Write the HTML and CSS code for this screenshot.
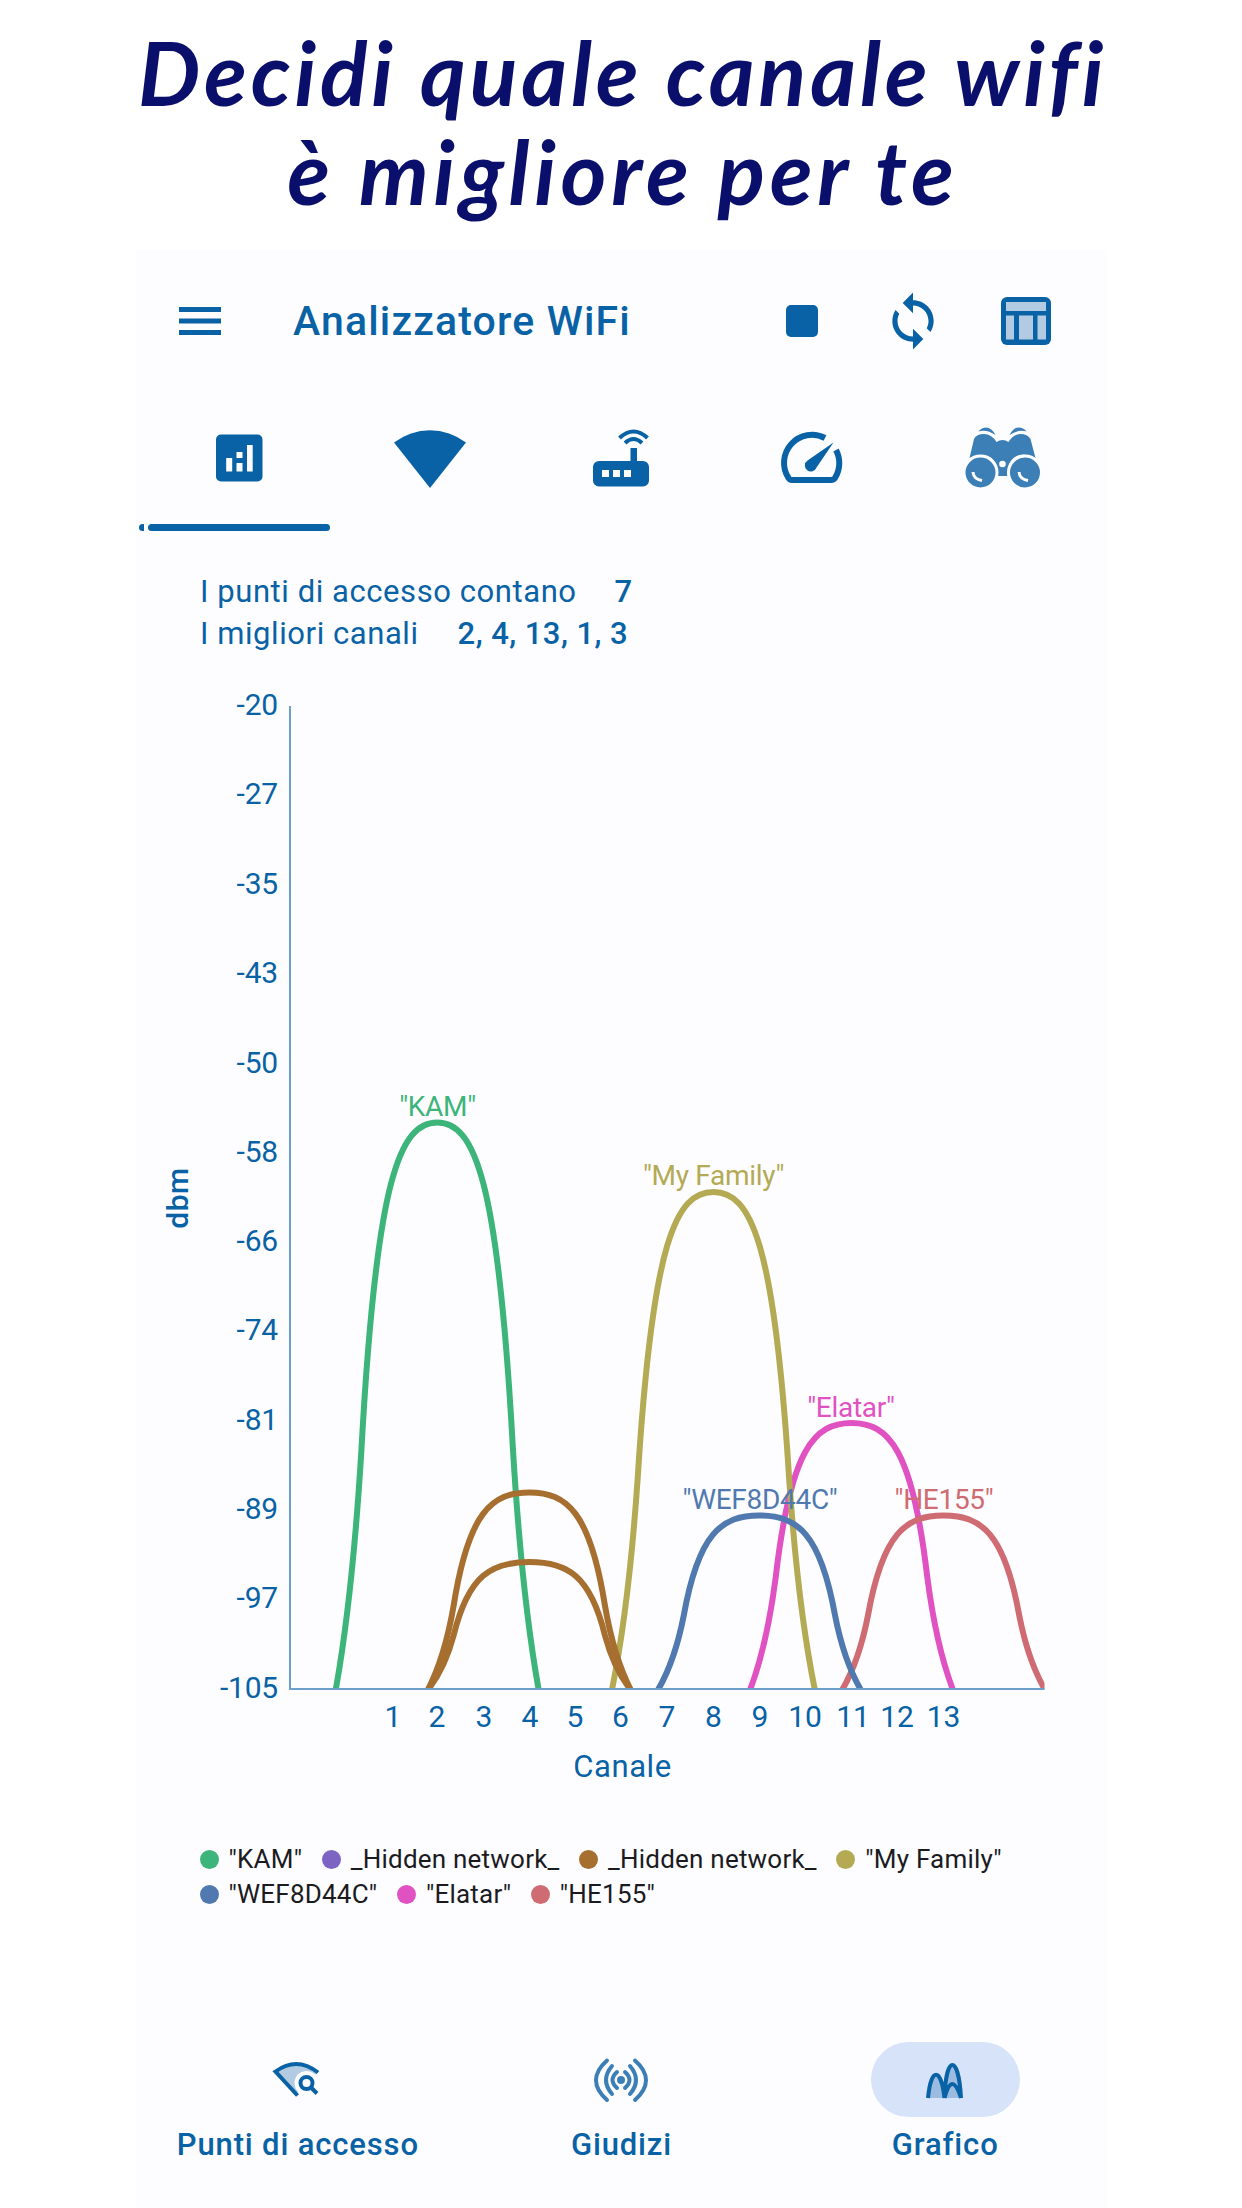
FILE: index.html
```html
<!DOCTYPE html>
<html lang="it">
<head>
    <meta charset="UTF-8">
    <meta name="viewport" content="width=device-width, initial-scale=1.0">
    <title>Analizzatore WiFi</title>
    <link rel="stylesheet" href="styles.css">
</head>
<body>
    <h1 class="headline">
        <span class="line-one">Decidi quale canale wifi</span>
        <span class="line-two">è migliore per te</span>
    </h1>
    <div class="phone">
        <header class="topbar">
            <svg class="menu" width="42" height="28" viewBox="0 0 42 28">
                <path d="M0 0h42v5H0zM0 11.500h42v5H0zM0 23h42v5H0z"/>
            </svg>
            <h2>Analizzatore WiFi</h2>
            <svg class="stop" width="32" height="32" viewBox="0 0 32 32">
                <rect width="32" height="32" rx="5"/>
            </svg>
            <svg class="sync" width="62" height="62" viewBox="0 0 24 24">
                <path d="M12 4V1L8 5l4 4V6c3.31 0 6 2.69 6 6 0 1.01-.25 1.97-.7 2.8l1.46 1.46C19.54 15.03 20 13.57 20 12c0-4.42-3.58-8-8-8zm0 14c-3.31 0-6-2.69-6-6 0-1.01.25-1.97.7-2.8L5.24 7.74C4.46 8.97 4 10.43 4 12c0 4.42 3.58 8 8 8v3l4-4-4-4v3z"/>
            </svg>
            <svg class="table" width="50" height="48" viewBox="0 0 50 48">
                <rect width="50" height="48" rx="6"/>
                <path class="tint" d="M5 5h40v9H5zM5 18.500h8v24H5zM18 18.500h14v24H18zM36.500 18.500H45v24h-8.500z"/>
            </svg>
        </header>

        <nav class="tabs">
            <svg width="80" height="64" viewBox="0 0 80 64">
                <rect x="17" y="8.500" width="46.500" height="47" rx="5"/>
                <path class="cut" d="M27.200 32h6v13.500h-6zM37.500 26h6v6h-6zM37.500 37h6v8.500h-6zM48 19h5.700v26.500H48z"/>
            </svg>
            <svg width="80" height="64" viewBox="0 0 80 64">
                <path d="M4 16.500A59 59 0 0 1 76 16.500L40 62z"/>
            </svg>
            <svg width="80" height="64" viewBox="0 0 80 64">
                <path d="M18 35H49.500V22h6.500V35H62a6 6 0 0 1 6 6V54.500a6 6 0 0 1-6 6H18a6 6 0 0 1-6-6V41a6 6 0 0 1 6-6z"/>
                <path class="cut" d="M21 44h7v7h-7zM32 44h7v7h-7zM43 44h7v7h-7z"/>
                <path class="stroke" stroke-width="4" d="M38.500 12Q52.500-1 66.500 12M44 17Q52.500 9 61 17"/>
            </svg>
            <svg width="80" height="64" viewBox="1 0 80 64">
                <path class="stroke" stroke-width="6" d="M54 12A28 28 0 0 0 17.500 52Q18.500 54 21 54H60Q62.500 54 64 52A28 28 0 0 0 65 24"/>
                <path d="M62.500 16.500L45.500 41.500A6 6 0 1 1 36.500 34.500z"/>
            </svg>
            <svg class="soft" width="80" height="64" viewBox="3.500 0 80 64">
                <path d="M10 32L14.500 13Q17 8 24.500 8Q32 8 37 16Q43 12 49 16Q54 8 61 8Q68 8 71 13L76 32L70 30Q62 26 54 32Q48 37 48 50H38.500Q38 37 32 32Q24 26 10 32z"/>
                <path d="M19 5.500Q22 1.500 27 1.500T36 9Q27 3 19 5.500zM67 5.500Q64 1.500 59 1.500T50 9Q59 3 67 5.500z"/>
                <circle class="rim" cx="21" cy="46.500" r="16.500"/>
                <circle class="rim" cx="65.500" cy="46.500" r="16.500"/>
                <circle class="cut" cx="43" cy="38" r="3.300"/>
                <path class="glint" d="M13.500 46Q14 53 22.500 54.500M59.500 46Q60 53 68.500 54.500"/>
            </svg>
        </nav>
        <div class="indicator"><i></i><b></b></div>

        <section class="summary">
            <p>I punti di accesso contano<b class="count">7</b></p>
            <p>I migliori canali<b class="channels">2, 4, 13, 1, 3</b></p>
        </section>

        <svg class="chart" width="971" height="1140" viewBox="136 670 971 1140">
            <defs>
                <!-- signal bell, one unit wide on each side and one unit high -->
                <path id="bell" vector-effect="non-scaling-stroke" d="M-1 0C-.91 .09-.81 .235-.746 .425C-.6 .9-.37 1 0 1S.6 .9 .746 .425C.81 .235 .91 .09 1 0"/>
                <clipPath id="plot"><rect x="291" y="700" width="753.500" height="989"/></clipPath>
            </defs>
            <g class="y-labels">
                <text x="278" y="715">-20</text>
                <text x="278" y="804">-27</text>
                <text x="278" y="894">-35</text>
                <text x="278" y="983">-43</text>
                <text x="278" y="1073">-50</text>
                <text x="278" y="1162">-58</text>
                <text x="278" y="1251">-66</text>
                <text x="278" y="1340">-74</text>
                <text x="278" y="1430">-81</text>
                <text x="278" y="1519">-89</text>
                <text x="278" y="1608">-97</text>
                <text x="278" y="1698">-105</text>
            </g>
            <text class="dbm" transform="translate(188 1198) rotate(-90)">dbm</text>
            <g class="curves" clip-path="url(#plot)">
                <use href="#bell" class="green" transform="translate(437.200 1690) scale(101.500 -567.500)"/>
                <use href="#bell" class="magenta" transform="translate(851.500 1690) scale(101.500 -267)"/>
                <use href="#bell" class="olive" transform="translate(713.400 1690) scale(101.500 -498)"/>
                <use href="#bell" class="brown" transform="translate(529.300 1690) scale(101.500 -197.500)"/>
                <use href="#bell" class="brown" transform="translate(529.300 1690) scale(101.500 -128)"/>
                <use href="#bell" class="red" transform="translate(943.600 1690) scale(101.500 -174.500)"/>
                <use href="#bell" class="blue" transform="translate(759.400 1690) scale(101.500 -174.500)"/>
            </g>
            <g class="names">
                <text class="green" x="437.500" y="1116">"KAM"</text>
                <text class="olive" x="713.500" y="1185">"My Family"</text>
                <text class="magenta" x="851" y="1417">"Elatar"</text>
                <text class="blue" x="760" y="1508.500">"WEF8D44C"</text>
                <text class="red" x="944" y="1508.500">"HE155"</text>
            </g>
            <path class="axis" d="M290 706V1689H1044.500"/>
            <g class="x-labels">
                <text x="393" y="1727">1</text>
                <text x="437" y="1727">2</text>
                <text x="484" y="1727">3</text>
                <text x="530" y="1727">4</text>
                <text x="575" y="1727">5</text>
                <text x="620.500" y="1727">6</text>
                <text x="667" y="1727">7</text>
                <text x="713.500" y="1727">8</text>
                <text x="760" y="1727">9</text>
                <text x="805" y="1727">10</text>
                <text x="853" y="1727">11</text>
                <text x="897" y="1727">12</text>
                <text x="943.500" y="1727">13</text>
            </g>
            <text class="axis-title" x="622.500" y="1776.500">Canale</text>
        </svg>

        <ul class="legend">
            <li class="green">"KAM"</li>
            <li class="purple">_Hidden network_</li>
            <li class="brown">_Hidden network_</li>
            <li class="olive">"My Family"</li>
            <li class="blue">"WEF8D44C"</li>
            <li class="magenta">"Elatar"</li>
            <li class="red">"HE155"</li>
        </ul>

        <nav class="bottom-nav">
            <a class="item">
                <span class="pill">
                    <svg width="60" height="50" viewBox="1 0 60 50">
                        <path class="tint" d="M9 17Q30 1 51 17L30 38z"/>
                        <path class="stroke" stroke-width="4" d="M30.500 40.500L8.500 16.500Q30 1 51 17.500"/>
                        <circle class="cut" cx="39.500" cy="28" r="12"/>
                        <path class="cut" d="M32 39L39 28L53 25V42H33z"/>
                        <circle class="stroke" stroke-width="4" cx="39.500" cy="28" r="6"/>
                        <path class="stroke" stroke-width="4" d="M43.500 32L50 38.500"/>
                    </svg>
                </span>
                Punti di accesso
            </a>
            <a class="item">
                <span class="pill">
                    <svg class="soft waves" width="60" height="50" viewBox="0 0 60 50">
                        <circle cx="29" cy="25" r="4"/>
                        <path d="M25 17Q16 25 25 33M20 11Q8 25 20 39M15 5.500Q-7 25 15 45M33 17Q42 25 33 33M38 11Q50 25 38 39M43 5.500Q65 25 43 45"/>
                    </svg>
                </span>
                Giudizi
            </a>
            <a class="item active">
                <span class="pill">
                    <svg width="60" height="50" viewBox="0 0 60 50">
                        <path class="tint" d="M13 43C15 12 27 12 29 43C30-1 44-1 46 43z"/>
                        <path class="stroke" stroke-width="4" d="M13 43C16 12 26 12 29.500 43M29.500 43C31-1 43.500-1 46 43M29.500 43Q37 15 46 43"/>
                    </svg>
                </span>
                Grafico
            </a>
        </nav>
    </div>
</body>
</html>
```
FILE: styles.css
```css
* {
    box-sizing: border-box;
}

body {
    margin: 0;
    background-color: #fff;
    font-family: Roboto, "Liberation Sans", sans-serif;
    color: #0862a5;
}

h1, h2, p, ul {
    margin: 0;
    padding: 0;
}

svg {
    display: block;
    flex: none;
    overflow: visible;
    fill: #0862a5;
}

.headline {
    height: 250px;
    padding-top: 23px;
    font-family: Lato, sans-serif;
    font-size: 88px;
    font-weight: 700;
    font-style: italic;
    line-height: 99px;
    text-align: center;
    white-space: nowrap;
    color: #0a0f6b;
}

.headline span {
    display: block;
}

.line-one {
    padding-left: 3px;
    letter-spacing: 3.9px;
}

.line-two {
    padding-left: 4px;
    letter-spacing: 4.7px;
}

.phone {
    width: 971px;
    height: 1958px;
    margin-left: 136px;
    background-color: #fdfdff;
}

.topbar {
    display: flex;
    align-items: center;
    height: 142px;
    padding-left: 43px;
}

.topbar h2 {
    width: 492px;
    padding-left: 72px;
    font-size: 41px;
    font-weight: 500;
    letter-spacing: 1.15px;
    white-space: nowrap;
}

.topbar .menu {
    margin-top: -1px;
}

.topbar .stop {
    margin-left: 73px;
}

.topbar .sync {
    margin-left: 64px;
}

.topbar .table {
    margin-left: 57px;
}

.tint {
    fill: #b3cbe2;
}

.cut {
    fill: #fdfdff;
}

.stroke {
    fill: none;
    stroke: #0862a5;
}

.soft {
    fill: #3b7fb6;
}

.rim {
    stroke: #fdfdff;
    stroke-width: 3;
}

.glint {
    fill: none;
    stroke: #fdfdff;
    stroke-width: 3;
}

.tabs {
    display: flex;
    gap: 111px;
    height: 132px;
    padding: 34px 0 0 63px;
}

.indicator {
    display: flex;
    height: 7px;
    margin-left: 3px;
}

.indicator i {
    width: 5px;
    height: 7px;
    margin-right: 4px;
    border-radius: 4px 0 0 4px;
    background-color: #0862a5;
}

.indicator b {
    width: 182px;
    border-radius: 4px;
    background-color: #0862a5;
}

.summary {
    height: 139px;
    padding: 39.500px 0 0 64px;
    font-size: 31px;
    line-height: 42px;
    letter-spacing: 0.57px;
    white-space: nowrap;
}

.summary b {
    font-weight: 500;
}

.count {
    margin-left: 38px;
}

.channels {
    margin-left: 39px;
    letter-spacing: 0.45px;
}

.chart text {
    font-size: 30px;
    text-anchor: middle;
}

.chart .y-labels text {
    letter-spacing: -0.2px;
    text-anchor: end;
}

.chart .dbm {
    font-weight: 500;
    letter-spacing: 0.5px;
}

.chart .axis-title {
    font-size: 31px;
    letter-spacing: 0.6px;
}

.chart .names text {
    font-size: 28px;
    letter-spacing: -0.3px;
    fill: currentColor;
}

.curves use {
    fill: none;
    stroke: currentColor;
    stroke-width: 6px;
}

.axis {
    fill: none;
    stroke: #6ba1cb;
    stroke-width: 2;
}

.green { color: #3db47a; }
.purple { color: #7d64c2; }
.brown { color: #a66f30; }
.olive { color: #b3aa53; }
.blue { color: #4f79af; }
.magenta { color: #e052c2; }
.red { color: #cf6b72; }

.legend {
    display: flex;
    flex-wrap: wrap;
    height: 232px;
    padding: 31.500px 60px 0 63.500px;
    align-content: flex-start;
    column-gap: 19.500px;
    list-style: none;
    font-size: 26px;
    line-height: 35px;
    letter-spacing: 0.22px;
}

.legend li {
    display: flex;
    align-items: center;
    padding-top: 1px;
    height: 35px;
    -webkit-text-fill-color: #1b1b1f;
}

.legend li::before {
    content: "";
    width: 19px;
    height: 19px;
    margin-right: 10px;
    border-radius: 50%;
    background-color: currentColor;
}

.bottom-nav {
    display: flex;
}

.item {
    display: flex;
    flex-direction: column;
    align-items: center;
    flex: 1;
    font-size: 31px;
    font-weight: 500;
    line-height: 36px;
    letter-spacing: 0.85px;
}

.pill {
    display: flex;
    justify-content: center;
    align-items: center;
    width: 149px;
    height: 75px;
    margin-bottom: 10px;
    border-radius: 38px;
}

.active .pill {
    background-color: #d7e3f8;
}

.active .tint {
    fill: #9bbce0;
}

.waves path {
    fill: none;
    stroke: #3b7fb6;
    stroke-width: 4;
    stroke-linecap: round;
}
```
